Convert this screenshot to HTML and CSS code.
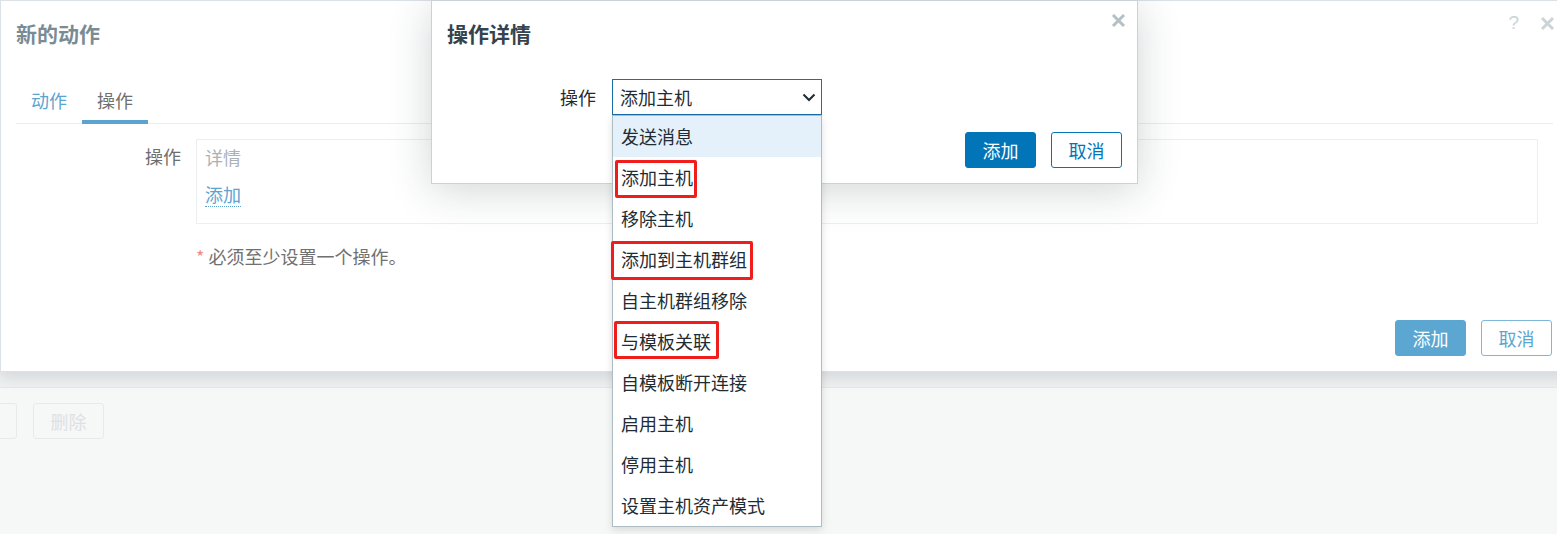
FILE: index.html
```html
<!DOCTYPE html>
<html lang="zh-CN">
<head>
    <meta charset="UTF-8">
    <title>操作详情</title>
    <link rel="stylesheet" href="styles.css">
</head>
<body>

    <div class="page">
        <div class="page-head"></div>
        <div class="toolbar">
            <button class="ghost-btn cut" disabled></button>
            <button class="ghost-btn" disabled>删除</button>
        </div>
    </div>

    <div class="dialog main-dialog">
        <div class="dialog-head">
            <h4>新的动作</h4>
            <div class="head-icons">
                <span class="help">?</span>
                <svg class="close-icon faded" width="15" height="15" viewBox="0 0 15 15"><path d="M2 2L13 13M13 2L2 13"/></svg>
            </div>
        </div>

        <ul class="tabs">
            <li class="tab">动作</li>
            <li class="tab active">操作</li>
        </ul>

        <div class="form-row">
            <label class="row-label">操作</label>
            <div class="ops-table">
                <div class="ops-header">详情</div>
                <a class="dotted-link">添加</a>
            </div>
        </div>

        <div class="form-row">
            <span></span>
            <div class="note"><span class="asterisk">*</span> 必须至少设置一个操作。</div>
        </div>

        <div class="dialog-foot">
            <button class="btn-primary faded">添加</button>
            <button class="btn-alt faded">取消</button>
        </div>
    </div>

    <div class="dialog sub-dialog">
        <div class="dialog-head">
            <h4>操作详情</h4>
            <svg class="close-icon" width="15" height="15" viewBox="0 0 15 15"><path d="M2 2L13 13M13 2L2 13"/></svg>
        </div>

        <div class="sub-row">
            <label class="row-label">操作</label>
            <div class="select-wrap">
                <div class="select">
                    <span>添加主机</span>
                    <svg width="14" height="9" viewBox="0 0 14 9"><polyline points="1.5,1.5 7,7 12.5,1.5"/></svg>
                </div>
                <ul class="dropdown">
                    <li class="hover">发送消息</li>
                    <li>添加主机</li>
                    <li>移除主机</li>
                    <li>添加到主机群组</li>
                    <li>自主机群组移除</li>
                    <li>与模板关联</li>
                    <li>自模板断开连接</li>
                    <li>启用主机</li>
                    <li>停用主机</li>
                    <li>设置主机资产模式</li>
                </ul>
                <!-- annotation boxes -->
                <div class="mark mark-1"></div>
                <div class="mark mark-2"></div>
                <div class="mark mark-3"></div>
            </div>
        </div>

        <div class="dialog-foot">
            <button class="btn-primary">添加</button>
            <button class="btn-alt">取消</button>
        </div>
    </div>

</body>
</html>
```

FILE: styles.css
```css
html, body {
    overflow: hidden;
}
body {
    margin: 0;
    font-family: "Noto Sans CJK SC", "Noto Sans", sans-serif;
    font-size: 18px;
    color: #1f2c33;
    background-color: #f6f7f7;
    width: 1557px;
    height: 534px;
    position: relative;
}
ul {
    list-style: none;
    margin: 0;
    padding: 0;
}
button {
    font-family: inherit;
    font-size: 18px;
    box-sizing: border-box;
    height: 36px;
    width: 71px;
    padding: 0;
    border-radius: 3px;
    line-height: 34px;
}

/* page behind the dialogs */
.page-head {
    height: 387px;
    background-color: #eef0f1;
    border-bottom: 1px solid #e5e8ea;
}
.toolbar {
    display: flex;
    gap: 16px;
    padding-top: 15px;
}
.ghost-btn {
    background-color: #f6f7f7;
    border: 1px solid #e7e9ea;
    color: #dde1e3;
}
.ghost-btn.cut {
    margin-left: -54px;
}

/* dialogs */
.dialog {
    position: absolute;
    top: 0;
    box-sizing: border-box;
    background-color: #fff;
}
.dialog-head {
    position: relative;
    padding: 20px 15px 0;
}
.dialog-head h4 {
    margin: 0;
    font-size: 21px;
    line-height: 24px;
    font-weight: bold;
}
.close-icon {
    display: block;
    stroke: #b5c0c6;
    stroke-width: 3;
}
.main-dialog {
    left: 0;
    right: -13px;
    height: 372px;
    border: 1px solid #dbe1e4;
    box-shadow: 0 5px 14px rgba(30, 45, 55, 0.13);
}
.main-dialog h4 {
    color: #7b8b94;
}
.head-icons {
    position: absolute;
    top: 13px;
    right: 14px;
    display: flex;
    align-items: center;
    gap: 21px;
}
.help {
    font-family: "Liberation Sans", sans-serif;
    color: #ccd3d7;
    font-size: 19px;
    line-height: 18px;
}
.close-icon.faded {
    stroke: #cdd4d8;
}

.tabs {
    display: flex;
    margin: 43px 16px 0 15px;
    border-bottom: 1px solid #ebeef0;
}
.tab {
    padding: 0 15px 8px;
    line-height: 24px;
    color: #5ba4d0;
    border-bottom: 4px solid transparent;
    margin-bottom: -1px;
}
.tab.active {
    color: #707070;
    border-bottom-color: #5ba4d0;
}

.form-row {
    display: grid;
    grid-template-columns: 180px 1fr;
    column-gap: 15px;
    margin-top: 15px;
}
.row-label {
    text-align: right;
    line-height: 24px;
    padding-top: 5px;
    color: #6e6e6e;
}
.ops-table {
    border: 1px solid #eceff1;
    margin-right: 31px;
    padding: 5px 8px 16px;
    line-height: 24px;
}
.ops-header {
    color: #a9b2b7;
    margin-bottom: 13px;
}
.dotted-link {
    display: inline-block;
    color: #5ba4d0;
    border-bottom: 1px dotted #5ba4d0;
}
.form-row + .form-row {
    margin-top: 20px;
}
.note {
    line-height: 24px;
    color: #707070;
}
.asterisk {
    color: #f08a8a;
}

.dialog-foot {
    display: flex;
    justify-content: flex-end;
    gap: 15px;
    padding: 0 15px 15px;
}
.main-dialog .dialog-foot {
    position: absolute;
    bottom: 0;
    right: 2px;
}
.btn-primary {
    background-color: #0275b8;
    border: 1px solid #0275b8;
    color: #fff;
}
.btn-alt {
    background-color: #fff;
    border: 1px solid #0275b8;
    color: #0275b8;
}
.btn-primary.faded {
    background-color: #5ca6d2;
    border-color: #5ca6d2;
}
.btn-alt.faded {
    border-color: #7db7da;
    color: #5ca6d2;
}

/* second dialog */
.sub-dialog {
    left: 431px;
    width: 707px;
    height: 184px;
    border: 1px solid #c9d2d7;
    box-shadow: 0 6px 40px rgba(31, 44, 51, 0.2);
}
.sub-dialog h4 {
    color: #34434c;
}
.sub-dialog .close-icon {
    position: absolute;
    top: 12px;
    right: 11px;
}
.sub-row {
    display: grid;
    grid-template-columns: 164px 210px;
    column-gap: 16px;
    margin-top: 34px;
}
.sub-row .row-label {
    color: #1f2c33;
    padding-top: 6px;
}
.select-wrap {
    position: relative;
}
.select {
    box-sizing: border-box;
    height: 36px;
    border: 1px solid #1c6ea6;
    display: flex;
    align-items: center;
    justify-content: space-between;
    padding: 0 5px 0 7px;
    line-height: 24px;
}
.select svg {
    fill: none;
    stroke: #1f2c33;
    stroke-width: 2;
}
.dropdown {
    position: absolute;
    top: 36px;
    left: 0;
    width: 210px;
    box-sizing: border-box;
    border: 1px solid #aebcc4;
    background-color: #fff;
    box-shadow: 0 3px 8px rgba(0, 0, 0, 0.12);
    z-index: 2;
}
.dropdown li {
    height: 41px;
    line-height: 41px;
    padding-left: 8px;
}
.dropdown li.hover {
    background-color: #e4f1fb;
}
.sub-dialog .dialog-foot {
    margin-top: 17px;
}

/* red annotation boxes */
.mark {
    position: absolute;
    box-sizing: border-box;
    border: 3px solid #f01d1d;
    border-radius: 2px;
    z-index: 3;
}
.mark-1 {
    left: 3px;
    top: 81px;
    width: 82px;
    height: 38px;
}
.mark-2 {
    left: -1px;
    top: 162px;
    width: 142px;
    height: 39px;
}
.mark-3 {
    left: 2px;
    top: 242px;
    width: 105px;
    height: 38px;
}
```
